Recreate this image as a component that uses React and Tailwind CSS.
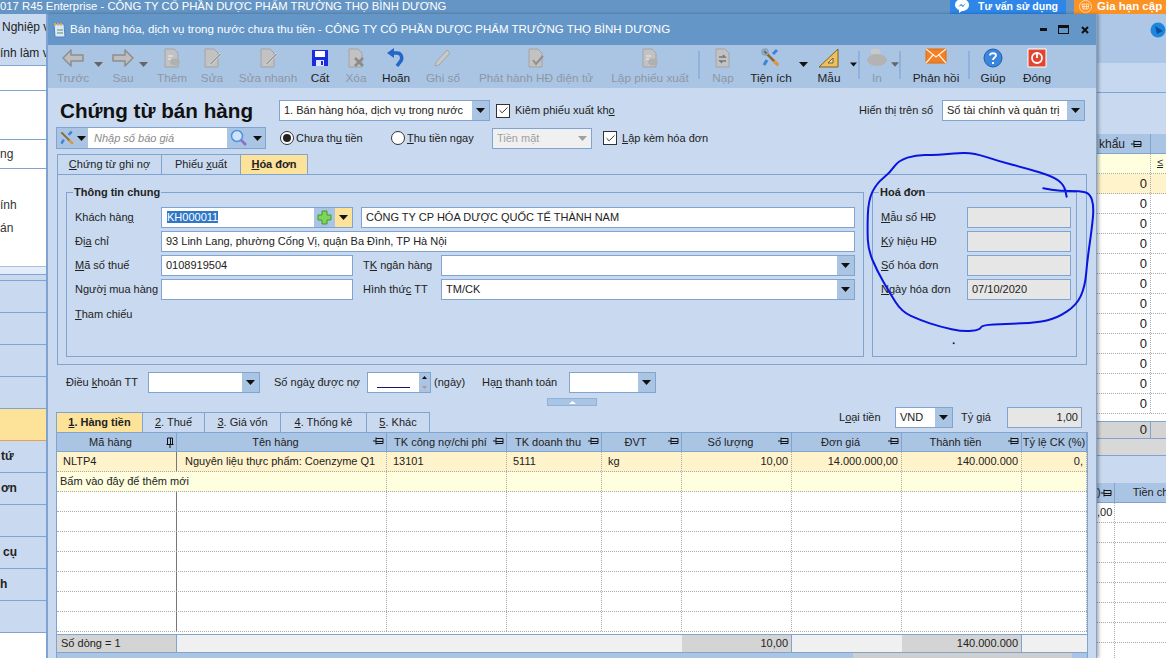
import React from "react";
import { Check } from "lucide-react";

const line = "border-[#7fa4d0]";

const Caret = ({ color = "#111" }) => (
  <svg width="9" height="5" viewBox="0 0 9 5">
    <path d="M0 0h9L4.5 5z" fill={color} />
  </svg>
);

const Pin = () => (
  <svg width="11" height="8" viewBox="0 0 11 8" className="shrink-0">
    <path d="M0 4h3M3 .5v7M3 1.5h7v5H3M3 4.5h7" fill="none" stroke="#111" strokeWidth="1" />
  </svg>
);

const PinDown = () => (
  <svg width="8" height="11" viewBox="0 0 8 11" className="shrink-0">
    <path d="M.5 7.5h7M1.500 1h5v6.500h-5zM4 7.500V11M4.500 1v6" fill="none" stroke="#111" strokeWidth="1" />
  </svg>
);

const PageShape = () => (
  <path d="M3 1h9l4 4v14H3z" fill="#c2c2c2" stroke="#a3a3a3" strokeWidth="1" />
);

// toolbar icons
const icons = {
  back: (
    <svg width="24" height="20" viewBox="0 0 24 20">
      <path d="M10 2 2 10l8 8v-5h12V7H10z" fill="#bdbdbd" stroke="#8d8d8d" strokeWidth="1.5" strokeLinejoin="round" />
    </svg>
  ),
  next: (
    <svg width="24" height="20" viewBox="0 0 24 20">
      <path d="M14 2l8 8-8 8v-5H2V7h12z" fill="#bdbdbd" stroke="#8d8d8d" strokeWidth="1.500" strokeLinejoin="round" />
    </svg>
  ),
  add: (
    <svg width="20" height="20" viewBox="0 0 20 20">
      <PageShape />
      <ellipse cx="13" cy="14" rx="5" ry="3.500" fill="#b0b0b0" />
      <path d="M6 8h5M6 11h3" stroke="#eee" />
    </svg>
  ),
  edit: (
    <svg width="20" height="20" viewBox="0 0 20 20">
      <PageShape />
      <path d="M8 15 18 5l1.500 1.500-10 10-2.500.5z" fill="#9f9f9f" stroke="#dcdcdc" strokeWidth=".7" />
    </svg>
  ),
  save: (
    <svg width="20" height="20" viewBox="0 0 20 20">
      <path d="M2 2h16v16H2z" fill="#1d2be0" />
      <path d="M5 3h10v6H5z" fill="#fff" />
      <path d="M6 12h8v6H6z" fill="#dfe6f5" />
      <path d="M11 13h2v4h-2z" fill="#1d2be0" />
    </svg>
  ),
  del: (
    <svg width="20" height="20" viewBox="0 0 20 20">
      <PageShape />
      <path d="M9 10l8 8M17 10l-8 8" stroke="#8a8a8a" strokeWidth="2.500" />
    </svg>
  ),
  undo: (
    <svg width="20" height="20" viewBox="0 0 20 20">
      <path d="M4 5h7c5 0 6 6 3 9l-3 4" fill="none" stroke="#2467c8" strokeWidth="3.500" />
      <path d="M8 0 1 5l7 5z" fill="#2467c8" />
    </svg>
  ),
  pencil: (
    <svg width="20" height="20" viewBox="0 0 20 20">
      <path d="M3 14 14 2l3 3L6 17l-4 1z" fill="#c8c8c8" stroke="#a5a5a5" />
    </svg>
  ),
  check: (
    <svg width="20" height="20" viewBox="0 0 20 20">
      <PageShape />
      <path d="M7 12l3 4 7-8" fill="none" stroke="#8f8f8f" strokeWidth="2" />
    </svg>
  ),
  reload: (
    <svg width="20" height="20" viewBox="0 0 20 20">
      <PageShape />
      <path d="M6 9h6l-2-2M13 13H7l2 2" fill="none" stroke="#777" strokeWidth="1.500" />
    </svg>
  ),
  tools: (
    <svg width="20" height="20" viewBox="0 0 20 20">
      <path d="M3 3l14 14" stroke="#8a6a3a" strokeWidth="2.500" />
      <path d="M16 2l-4 4M6 12l-3 5" stroke="#3d83d6" strokeWidth="3" />
      <path d="M13 13l4 4" stroke="#e39a32" strokeWidth="3" />
      <circle cx="4" cy="4" r="3" fill="none" stroke="#7fa4c8" strokeWidth="1.500" />
    </svg>
  ),
  ruler: (
    <svg width="22" height="20" viewBox="0 0 22 20">
      <path d="M20 1v18H1z" fill="#efc05a" stroke="#7a6128" />
      <path d="M15 10v5h-5z" fill="#cfe0f3" stroke="#7a6128" />
    </svg>
  ),
  print: (
    <svg width="22" height="20" viewBox="0 0 22 20">
      <path d="M5 1h8l2 5H5z" fill="#c9c9c9" />
      <ellipse cx="11" cy="12" rx="10" ry="6" fill="#b3b3b3" />
    </svg>
  ),
  mail: (
    <svg width="22" height="16" viewBox="0 0 22 16">
      <path d="M1 1h20v14H1z" fill="#f47f24" stroke="#e06a10" />
      <path d="M1 1l10 8 10-8M1 15l7-8M21 15l-7-8" fill="none" stroke="#fff3e0" strokeWidth="1.200" />
    </svg>
  ),
  help: (
    <svg width="20" height="20" viewBox="0 0 20 20">
      <circle cx="10" cy="10" r="9" fill="#3b86dc" stroke="#1d5db0" />
      <path d="M7 7.500c0-3 6-3 6 0 0 2-3 2-3 4.500" fill="none" stroke="#fff" strokeWidth="1.800" />
      <path d="M9 14h2v2H9z" fill="#fff" />
    </svg>
  ),
  power: (
    <svg width="20" height="20" viewBox="0 0 20 20">
      <path d="M1 1h18v18H1z" fill="#e2452f" stroke="#fff" />
      <circle cx="10" cy="10" r="5" fill="none" stroke="#fff" strokeWidth="1.800" />
      <path d="M10 4v6" stroke="#fff" strokeWidth="1.800" />
    </svg>
  ),
};

const toolbar = [
  { w: "w-[40px] pl-[10px]", label: "Trước", icon: icons.back, off: true },
  { dd: "w-[20px]", off: true },
  { w: "w-[30px]", label: "Sau", icon: icons.next, off: true },
  { dd: "w-[10px]", off: true },
  { w: "w-[48px]", label: "Thêm", icon: icons.add, off: true },
  { w: "w-[32px]", label: "Sửa", icon: icons.edit, off: true },
  { w: "w-[80px]", label: "Sửa nhanh", icon: icons.edit, off: true },
  { w: "w-[24px]", label: "Cất", icon: icons.save },
  { w: "w-[48px]", label: "Xóa", icon: icons.del, off: true },
  { w: "w-[32px]", label: "Hoãn", icon: icons.undo },
  { w: "w-[62px]", label: "Ghi sổ", icon: icons.pencil, off: true },
  { w: "w-[124px]", label: "Phát hành HĐ điện tử", icon: icons.check, off: true },
  { w: "w-[104px]", label: "Lập phiếu xuất", icon: icons.add, off: true },
  { sep: "-ml-[4px] mr-[2px]" },
  { w: "w-[42px]", label: "Nạp", icon: icons.reload, off: true },
  { w: "w-[54px]", label: "Tiện ích", icon: icons.tools },
  { dd: "w-[10px]" },
  { w: "w-[42px]", label: "Mẫu", icon: icons.ruler },
  { dd: "w-[7px]" },
  { sep: "ml-[1px] mr-[3px]" },
  { w: "w-[28px]", label: "In", icon: icons.print, off: true },
  { dd: "w-[8px]", off: true },
  { sep: "mr-0" },
  { w: "w-[70px]", label: "Phản hồi", icon: icons.mail },
  { sep: "-ml-[3px] mr-[1px]" },
  { w: "w-[44px]", label: "Giúp", icon: icons.help },
  { w: "w-[44px]", label: "Đóng", icon: icons.power },
];

const Combo = ({ w, children, disabled }) => (
  <div className={`${w} h-[21px] flex shrink-0 border ${line} ${disabled ? "bg-[#f0f0f0] text-[#a0a0a0]" : "bg-white"}`}>
    <div className="flex-1 min-w-0 px-[4px] leading-[19px] whitespace-nowrap overflow-hidden">{children}</div>
    <div className={`w-[17px] flex items-center justify-center ${disabled ? "" : "bg-[#aac5e4]"}`}>
      <Caret color={disabled ? "#a0a0a0" : "#111"} />
    </div>
  </div>
);

const Field = ({ w, gray, children }) => (
  <div className={`${w} h-[21px] shrink-0 border ${line} px-[4px] leading-[19px] whitespace-nowrap overflow-hidden ${gray ? "bg-[#e6e6e6]" : "bg-white"}`}>
    {children}
  </div>
);

const CheckBox = () => (
  <span className="w-[14px] h-[14px] shrink-0 border border-[#333] bg-white flex items-center justify-center">
    <Check size={11} strokeWidth={2} color="#222" />
  </span>
);

const Radio = ({ on }) => (
  <span className="w-[14px] h-[14px] shrink-0 rounded-full border border-[#333] bg-white flex items-center justify-center">
    {on && <span className="w-[8px] h-[8px] rounded-full bg-[#222]" />}
  </span>
);

const cols = "grid grid-cols-[120px_210px_120px_95px_80px_110px_110px_120px_65px]";
const headers = ["Mã hàng", "Tên hàng", "TK công nợ/chi phí", "TK doanh thu", "ĐVT", "Số lượng", "Đơn giá", "Thành tiền", "Tỷ lệ CK (%)"];
const firstRow = ["NLTP4", "Nguyên liệu thực phẩm: Coenzyme Q1", "13101", "5111", "kg", "10,00", "14.000.000,00", "140.000.000", "0,"];
const rightCols = [5, 6, 7, 8];
const emptyRows = [1, 2, 3, 4, 5, 6, 7];
const blankCells = [1, 2, 3, 4, 5, 6, 7, 8];
const sideZeros = ["0", "0", "0", "0", "0", "0", "0", "0", "0", "0", "0", "0"];

// pen stroke around the invoice box, in 3x coordinates of its own box
const inkPoints = [
  [680, 200], [672, 165], [640, 140], [560, 115], [480, 95], [400, 68], [340, 70], [290, 76], [230, 74], [175, 92],
  [150, 128], [110, 160], [85, 210], [82, 300], [85, 360], [110, 420], [150, 490], [185, 545], [240, 570], [300, 590],
  [370, 605], [420, 600], [425, 585], [500, 582], [590, 578], [650, 565], [710, 525], [735, 470], [742, 390], [755, 300],
  [762, 230], [750, 190], [720, 183], [660, 183], [610, 175],
];
const inkPath = inkPoints.reduce((d, p, i) => {
  if (i === 0) return `M${p[0]} ${p[1]}`;
  const prev = inkPoints[i - 1];
  return `${d} Q${prev[0]} ${prev[1]} ${(prev[0] + p[0]) / 2} ${(prev[1] + p[1]) / 2}`;
}, "") + " L610 175";

const SideRow = ({ children, className = "" }) => (
  <div className={`h-[32px] border-b ${line} bg-[#c9daf0] font-bold text-[12px] leading-[31px] whitespace-nowrap overflow-hidden ${className}`}>
    {children}
  </div>
);

export default function App() {
  return (
    <div className="relative w-[1166px] h-[658px] overflow-hidden bg-white font-['Liberation_Sans',sans-serif] text-[11px] text-[#222]">
      {/* main window behind */}
      <div className="h-[14px] flex bg-[#6495c5] text-white overflow-hidden">
        <div className="flex-1 text-[11.3px] leading-[13px] whitespace-nowrap">017 R45 Enterprise - CÔNG TY CỔ PHẦN DƯỢC PHẨM TRƯỜNG THỌ BÌNH DƯƠNG</div>
        <div className="w-[116px] mr-[8px] pb-[2px] bg-[#2d86e8] flex items-center font-bold text-[10.5px] leading-[11px] pl-[5px] gap-[9px] whitespace-nowrap">
          <svg width="14" height="14" viewBox="0 0 14 14" className="shrink-0">
            <path d="M7 0c4 0 7 2.500 7 6s-3 6-7 6l-3 2v-3C2 10 0 8.500 0 6c0-3.500 3-6 7-6z" fill="#fff" />
            <path d="M3 8l3-3 2 1.500L11 4 8 8 6 6.500z" fill="#2d86e8" />
          </svg>
          Tư vấn sử dụng
        </div>
        <div className="w-[92px] pb-[2px] bg-[#fb9224] flex items-center font-bold text-[11.5px] leading-[11px] pl-[5px] gap-[5px] whitespace-nowrap">
          <svg width="13" height="13" viewBox="0 0 13 13" className="shrink-0">
            <circle cx="6.500" cy="6.500" r="6" fill="none" stroke="#ffd9a8" />
            <path d="M3 4h7l-1 5H4zM5 4v5M7.500 4v5M3.500 6.500h6" fill="none" stroke="#ffe6c8" strokeWidth=".8" />
          </svg>
          Gia hạn cập nhật
        </div>
      </div>

      <div className="flex h-[644px]">
        <div className="w-[47px] shrink-0 overflow-hidden border-r border-[#7fa4d0]">
          <div className="h-[26px] pl-[2px] leading-[26px] bg-[#c9daf0] whitespace-nowrap overflow-hidden text-[12px]">Nghiệp vụ</div>
          <div className={`h-[26px] leading-[26px] bg-[#c9daf0] border-b ${line} whitespace-nowrap overflow-hidden text-[12px]`}>ính làm việc</div>
          <div className={`h-[25px] border-b ${line}`} />
          <div className={`h-[49px] border-b ${line}`} />
          <div className={`h-[29px] border-b ${line} leading-[28px] whitespace-nowrap text-[#333] text-[12px]`}>ng</div>
          <div className="h-[98px] border-b border-[#a7c0de] leading-[23px] pt-[25px] text-[#333] text-[12px]">
            <div>ính</div>
            <div>án</div>
          </div>
          <div className={`h-[8px] bg-[#e4ecf7] border-b ${line}`} />
          <div className={`h-[6px] bg-[#c9daf0] border-b ${line}`} />
          <SideRow />
          <SideRow />
          <SideRow />
          <SideRow />
          <SideRow className="!bg-[#fde29a] !border-[#ee9d4f]" />
          <SideRow className="pl-[1px]">tứ</SideRow>
          <SideRow className="pl-[1px]">ơn</SideRow>
          <SideRow />
          <SideRow className="pl-[3px]">cụ</SideRow>
          <SideRow>h</SideRow>
          <SideRow />
        </div>

        <div className="w-[1050px] shrink-0" />

        <div className="flex-1 min-w-0 overflow-hidden">
          <div className="h-[49px] bg-[#aec7e6] flex justify-end pt-[8px]">
            <svg width="16" height="16" viewBox="0 0 16 16">
              <circle cx="8" cy="8" r="7.500" fill="#1f86e0" />
              <path d="M5 4l8 5-6 3z" fill="#0c4f9f" />
            </svg>
          </div>
          <div className={`h-[30px] bg-[#c6d8f0] border-b ${line}`} />
          <div className="h-[41px] bg-[#c9daf0]" />
          <div className={`h-[20px] flex bg-[#aac5e4] border-b ${line}`}>
            <div className={`w-[54px] border-r ${line} pl-[2px] flex items-center gap-[6px] text-[12px]`}>
              khẩu
              <Pin />
            </div>
          </div>
          <div className="h-[20px] flex bg-[#ffffe0] border-b border-dotted border-[#aaa]">
            <div className="w-[54px] border-r border-dotted border-[#aaa]" />
            <div className="pl-[6px] underline">≤</div>
          </div>
          {sideZeros.map((z, i) => (
            <div key={i} className={`h-[20px] flex border-b border-dotted border-[#aaa] leading-[19px] ${i === 0 ? "bg-[#fff3cc]" : "bg-white"}`}>
              <div className="w-[54px] border-r border-dotted border-[#aaa] text-right pr-[3px] text-[13px]">{z}</div>
            </div>
          ))}
          <div className="h-[7px]" />
          <div className={`h-[18px] flex bg-[#d4d4d4] border-y ${line}`}>
            <div className={`w-[54px] border-r ${line} text-right pr-[3px] text-[13px] leading-[16px]`}>0</div>
          </div>
          <div className={`h-[17px] bg-[#d8d8d8] border-b ${line}`} />
          <div className="h-[27px] bg-[#c9daf0]" />
          <div className={`h-[20px] flex bg-[#aac5e4] border-b ${line}`}>
            <div className={`w-[18px] border-r ${line} flex items-center justify-between pr-[2px]`}>
              )
              <Pin />
            </div>
            <div className="pl-[18px] leading-[19px] whitespace-nowrap">Tiền chiết khấu</div>
          </div>
          <div className="h-[20px] flex border-b border-dotted border-[#aaa] leading-[19px]">
            <div className="w-[18px] border-r border-dotted border-[#aaa]">,00</div>
          </div>
          {[1, 2, 3, 4, 5, 6, 7].map((r) => (
            <div key={r} className="h-[20px] flex border-b border-dotted border-[#aaa]">
              <div className="w-[18px] border-r border-dotted border-[#aaa]" />
            </div>
          ))}
        </div>
      </div>

      {/* sales voucher window */}
      <div className="absolute left-[47px] top-[14px] w-[1050px] h-[644px] flex flex-col bg-[#c9daf0] border-x border-[#7fa4d0] shadow-[2px_0_3px_rgba(0,0,0,0.3)]">
        <div className="h-[31px] shrink-0 flex items-center bg-[#6496c8] text-white text-[11.5px] pl-[4px]">
          <svg width="14" height="16" viewBox="0 0 14 16" className="shrink-0 mr-[4px]">
            <path d="M2 2h10l1 13H3z" fill="#dbe8ff" stroke="#5a7fc0" />
            <path d="M3 1v3M6 1v3M9 1v3" stroke="#e8b63c" strokeWidth="1.500" />
            <path d="M5 8h6M5 11h6" stroke="#4c9a4c" />
          </svg>
          <span className="whitespace-nowrap">Bán hàng hóa, dịch vụ trong nước chưa thu tiền - CÔNG TY CỔ PHẦN DƯỢC PHẨM TRƯỜNG THỌ BÌNH DƯƠNG</span>
          <div className="ml-auto flex items-center mr-[7px]">
            <span className="w-[7px] h-[3px] bg-[#111] mr-[11px]" />
            <span className="w-[11px] h-[9px] border border-t-[3px] border-[#111] mr-[12px]" />
            <svg width="8" height="8" viewBox="0 0 8 8">
              <path d="M1 1l6 6M7 1L1 7" stroke="#111" strokeWidth="2" />
            </svg>
          </div>
        </div>

        <div className="h-[43px] shrink-0 flex bg-[#aac5e4] text-[11.8px]">
          {toolbar.map((t, i) => {
            if (t.sep) return <span key={i} className={`w-[2px] h-[28px] mt-[6px] bg-[#8fb1da] shrink-0 ${t.sep}`} />;
            if (t.dd)
              return (
                <div key={i} className={`${t.dd} shrink-0 pt-[17px] flex justify-center`}>
                  <Caret color={t.off ? "#666" : "#111"} />
                </div>
              );
            return (
              <div key={i} className={`${t.w} box-border shrink-0 flex flex-col items-center ${t.off ? "text-[#8d97a5]" : "text-[#1e1e1e]"}`}>
                <div className="h-[24px] pt-[3px] flex items-start justify-center">{t.icon}</div>
                <div className="mt-[2px] leading-[14px] whitespace-nowrap">{t.label}</div>
              </div>
            );
          })}
        </div>

        <div className="mt-[12px] h-[21px] flex items-center shrink-0 pl-[12px] pr-[11px]">
          <div className="w-[219px] text-[20.7px] font-bold text-[#111] whitespace-nowrap leading-[21px]">Chứng từ bán hàng</div>
          <Combo w="w-[211px]">1. Bán hàng hóa, dịch vụ trong nước</Combo>
          <span className="ml-[6px] mr-[5px]"><CheckBox /></span>
          <span>Kiêm phiếu xuất kh<u>o</u></span>
          <span className="ml-auto mr-[9px]">Hiển thị trên sổ</span>
          <Combo w="w-[143px]">Sổ tài chính và quản trị</Combo>
        </div>

        <div className="mt-[6px] h-[22px] flex items-center shrink-0 pl-[8px]">
          <div className={`w-[210px] h-[22px] flex border ${line} bg-[#aac5e4]`}>
            <div className="w-[31px] flex items-center justify-center gap-[2px]">
              <svg width="16" height="16" viewBox="0 0 20 20">
                <path d="M3 3l14 14" stroke="#8a6a3a" strokeWidth="2.500" />
                <path d="M16 2l-4 4M6 12l-3 5" stroke="#3d83d6" strokeWidth="3" />
                <path d="M13 13l4 4" stroke="#e39a32" strokeWidth="3" />
              </svg>
              <Caret />
            </div>
            <div className="w-[139px] bg-white italic text-[#8a8a8a] pl-[6px] leading-[20px]">Nhập số báo giá</div>
            <div className="flex-1 flex items-center justify-center gap-[5px]">
              <svg width="18" height="18" viewBox="0 0 18 18">
                <circle cx="7" cy="7" r="5.500" fill="#cfe3fa" stroke="#4f93dc" strokeWidth="1.500" />
                <path d="M11 11l5 5" stroke="#8a70c8" strokeWidth="2.500" />
              </svg>
              <Caret />
            </div>
          </div>
          <span className="ml-[14px] mr-[2px]"><Radio on /></span>
          <span className="w-[95px] whitespace-nowrap">Chưa th<u>u</u> tiền</span>
          <span className="mr-[2px]"><Radio /></span>
          <span className="w-[85px] whitespace-nowrap"><u>T</u>hu tiền ngay</span>
          <Combo w="w-[100px]" disabled>Tiền mặt</Combo>
          <span className="ml-[11px] mr-[5px]"><CheckBox /></span>
          <span className="whitespace-nowrap"><u>L</u>ập kèm hóa đơn</span>
        </div>

        <div className="mt-[5px] h-[20px] flex shrink-0 pl-[9px]">
          <div className={`w-[105px] border border-b-0 ${line} text-center leading-[19px]`}><u>C</u>hứng từ ghi nợ</div>
          <div className={`w-[79px] border-t border-r ${line} text-center leading-[19px]`}>Phiếu <u>x</u>uất</div>
          <div className={`w-[67px] border-t border-r ${line} bg-[#fde29a] font-bold text-center leading-[19px]`}><u>H</u>óa đơn</div>
        </div>

        <div className={`ml-[9px] w-[1030px] h-[191px] shrink-0 border ${line} flex gap-[8px] pl-[8px] pt-[9px]`}>
          <fieldset className={`w-[798px] h-[173px] border ${line} pl-[8px]`}>
            <legend className="-ml-[2px] px-[1px] font-bold leading-[16px]">Thông tin chung</legend>
            <div className="mt-[7px] flex flex-col gap-[3px]">
              <div className="flex items-center h-[21px]">
                <span className="w-[86px]">Khách hàn<u>g</u></span>
                <div className={`w-[192px] h-[21px] flex border ${line} bg-white`}>
                  <div className="w-[152px] pl-[5px] leading-[19px]">
                    <span className="bg-[#2f78c8] text-white">KH000011</span>
                  </div>
                  <div className="w-[21px] bg-[#aac5e4] flex items-center justify-center">
                    <svg width="15" height="15" viewBox="0 0 15 15">
                      <path d="M5 1h5v4h4v5h-4v4H5v-4H1V5h4z" fill="#7fd45a" stroke="#3f9a2a" />
                    </svg>
                  </div>
                  <div className="flex-1 bg-[#fde29a] flex items-center justify-center"><Caret /></div>
                </div>
                <span className="ml-[8px]"><Field w="w-[494px]">CÔNG TY CP HÓA DƯỢC QUỐC TẾ THÀNH NAM</Field></span>
              </div>
              <div className="flex items-center h-[21px]">
                <span className="w-[86px]">Đị<u>a</u> chỉ</span>
                <Field w="w-[694px]">93 Linh Lang, phường Cống Vị, quận Ba Đình, TP Hà Nội</Field>
              </div>
              <div className="flex items-center h-[21px]">
                <span className="w-[86px]"><u>M</u>ã số thuế</span>
                <Field w="w-[192px]">0108919504</Field>
                <span className="w-[88px] pl-[10px] whitespace-nowrap">T<u>K</u> ngân hàng</span>
                <Combo w="w-[414px]" />
              </div>
              <div className="flex items-center h-[21px]">
                <span className="w-[86px] whitespace-nowrap">Ngườ<u>i</u> mua hàng</span>
                <Field w="w-[192px]" />
                <span className="w-[88px] pl-[10px] whitespace-nowrap">Hình thứ<u>c</u> TT</span>
                <Combo w="w-[414px]">TM/CK</Combo>
              </div>
              <div className="h-[21px] mt-[1px] leading-[21px]"><u>T</u>ham chiếu</div>
            </div>
          </fieldset>

          <fieldset className={`w-[205px] h-[173px] border ${line} pl-[8px]`}>
            <legend className="-ml-[2px] px-[1px] font-bold leading-[16px]">Hoá đơn</legend>
            <div className="mt-[7px] flex flex-col gap-[3px]">
              <div className="flex items-center h-[21px]">
                <span className="w-[86px]"><u>M</u>ẫu số HĐ</span>
                <Field w="w-[104px]" gray />
              </div>
              <div className="flex items-center h-[21px]">
                <span className="w-[86px]"><u>K</u>ý hiệu HĐ</span>
                <Field w="w-[104px]" gray />
              </div>
              <div className="flex items-center h-[21px]">
                <span className="w-[86px]"><u>S</u>ố hóa đơn</span>
                <Field w="w-[104px]" gray />
              </div>
              <div className="flex items-center h-[21px]">
                <span className="w-[86px]"><u>N</u>gày hóa đơn</span>
                <Field w="w-[104px]" gray>07/10/2020</Field>
              </div>
            </div>
          </fieldset>
        </div>

        <div className="mt-[7px] h-[21px] flex items-center shrink-0 pl-[18px]">
          <span className="w-[82px] whitespace-nowrap">Điều <u>k</u>hoản TT</span>
          <Combo w="w-[112px]" />
          <span className="ml-[14px] w-[93px] whitespace-nowrap">Số ngà<u>y</u> được nợ</span>
          <div className={`w-[64px] h-[21px] flex border ${line} bg-white`}>
            <div className="flex-1 px-[9px] pt-[14px]"><div className="h-[1px] bg-[#1a1070]" /></div>
            <div className="w-[11px] bg-[#aac5e4] flex flex-col items-center justify-around">
              <svg width="5" height="3" viewBox="0 0 5 3"><path d="M0 3h5L2.500 0z" fill="#111" /></svg>
              <svg width="5" height="3" viewBox="0 0 5 3"><path d="M0 0h5L2.500 3z" fill="#c98a8a" /></svg>
            </div>
          </div>
          <span className="ml-[3px] w-[48px]">(ngày)</span>
          <span className="w-[87px] whitespace-nowrap">Hạ<u>n</u> thanh toán</span>
          <Combo w="w-[87px]" />
        </div>

        <div className="mt-[5px] ml-[499px] w-[50px] h-[8px] shrink-0 bg-[#aac5e4] border border-[#8fb1da] flex items-center justify-center">
          <svg width="7" height="3" viewBox="0 0 7 3"><path d="M0 3h7L3.500 0z" fill="#fff" /></svg>
        </div>

        <div className="mt-[1px] h-[25px] flex shrink-0 pl-[8px] pr-[14px]">
          <div className="flex self-end h-[20px]">
            <div className={`w-[87px] border border-b-0 ${line} bg-[#fde29a] font-bold text-center leading-[19px]`}><u>1</u>. Hàng tiền</div>
            <div className={`w-[62px] border-t border-r ${line} text-center leading-[19px]`}><u>2</u>. Thuế</div>
            <div className={`w-[76px] border-t border-r ${line} text-center leading-[19px]`}><u>3</u>. Giá vốn</div>
            <div className={`w-[86px] border-t border-r ${line} text-center leading-[19px]`}><u>4</u>. Thống kê</div>
            <div className={`w-[63px] border-t border-r ${line} text-center leading-[19px]`}><u>5</u>. Khác</div>
          </div>
          <div className="ml-auto flex items-center self-start h-[21px]">
            <span className="w-[56px]">L<u>o</u>ại tiền</span>
            <Combo w="w-[58px]">VND</Combo>
            <span className="ml-[8px] w-[46px]">Tỷ <u>g</u>iá</span>
            <div className={`w-[75px] h-[21px] border ${line} bg-[#e6e6e6] text-right pr-[3px] leading-[19px]`}>1,00</div>
          </div>
        </div>

        <div className={`ml-[8px] w-[1032px] flex-1 min-h-0 border-x ${line} flex flex-col overflow-hidden bg-white`}>
          <div className={`${cols} h-[20px] shrink-0 bg-[#aac5e4] border-y ${line}`}>
            {headers.map((h, i) => (
              <div key={h} className={`relative flex items-center justify-center border-r ${line} whitespace-nowrap ${i < 8 ? "pr-[12px]" : ""}`}>
                {h}
                {i < 8 && (
                  <span className="absolute right-[2px] top-[4px]">{i === 0 ? <PinDown /> : <Pin />}</span>
                )}
              </div>
            ))}
          </div>
          <div className={`${cols} h-[20px] shrink-0 bg-[#fff3cc] border-b border-dotted border-[#aaa]`}>
            {firstRow.map((c, i) => (
              <div
                key={i}
                className={`leading-[19px] whitespace-nowrap overflow-hidden ${i === 0 ? "pl-[6px] border-r border-[#777]" : "border-r border-dotted border-[#aaa]"} ${rightCols.includes(i) ? "text-right pr-[3px]" : i === 1 ? "pl-[8px]" : i > 1 ? "pl-[6px]" : ""}`}
              >
                {c}
              </div>
            ))}
          </div>
          <div className={`${cols} h-[20px] shrink-0 bg-[#ffffe0] border-b border-dotted border-[#aaa]`}>
            <div className="col-span-2 pl-[3px] leading-[19px] border-r border-dotted border-[#aaa]">Bấm vào đây để thêm mới</div>
            {[1, 2, 3, 4, 5, 6, 7].map((c) => (
              <div key={c} className="border-r border-dotted border-[#aaa]" />
            ))}
          </div>
          {emptyRows.map((r) => (
            <div key={r} className={`${cols} h-[20px] shrink-0 border-b border-dotted border-[#aaa]`}>
              <div className="border-r border-[#777]" />
              {blankCells.map((c) => (
                <div key={c} className="border-r border-dotted border-[#aaa]" />
              ))}
            </div>
          ))}
          <div className={`mt-[2px] ${cols} h-[19px] shrink-0 bg-[#f0f0f0] border-y ${line} leading-[17px]`}>
            <div className={`bg-[#d4d4d4] border-r ${line} pl-[4px]`}>Số dòng = 1</div>
            <div className="col-span-4" />
            <div className={`bg-[#d4d4d4] border-r ${line} text-right pr-[3px]`}>10,00</div>
            <div />
            <div className={`bg-[#d4d4d4] border-r ${line} text-right pr-[3px]`}>140.000.000</div>
            <div />
          </div>
          <div className="flex-1 bg-[#aac5e4] flex">
            <div className="ml-[796px] w-[219px] bg-[#cfcfcf]" />
          </div>
        </div>
      </div>

      {/* pen annotation drawn on top of the screenshot */}
      <svg width="326" height="230" viewBox="0 0 978 690" className="absolute left-[840px] top-[130px] pointer-events-none">
        <path d={inkPath} fill="none" stroke="#0a14e0" strokeWidth="6" strokeLinecap="round" strokeLinejoin="round" />
        <circle cx="341" cy="640" r="3" fill="#0a147a" />
      </svg>
    </div>
  );
}
